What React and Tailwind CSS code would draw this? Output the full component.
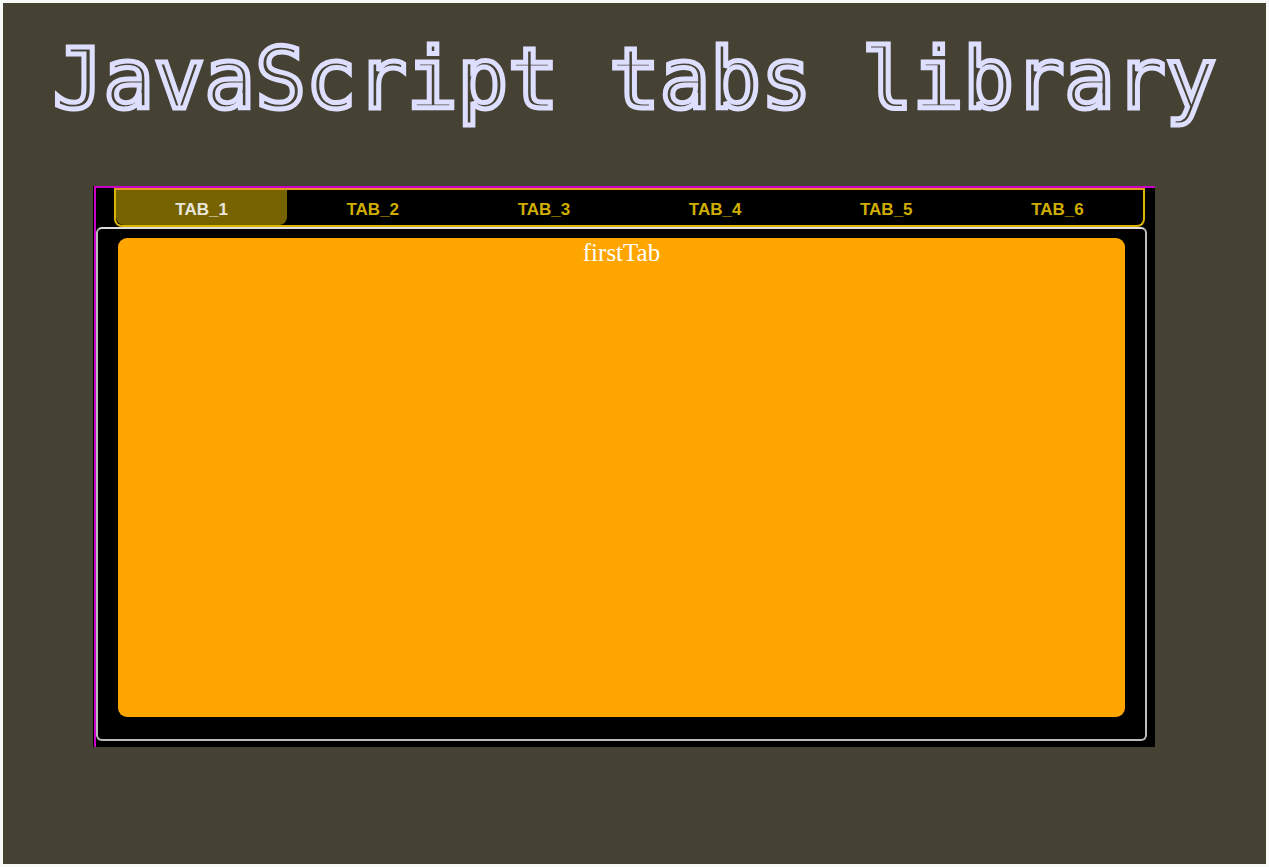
import { useState } from "react";

const tabs = [
  { label: "TAB_1", content: "firstTab" },
  { label: "TAB_2", content: "secondTab" },
  { label: "TAB_3", content: "thirdTab" },
  { label: "TAB_4", content: "fourthTab" },
  { label: "TAB_5", content: "fifthTab" },
  { label: "TAB_6", content: "sixthTab" },
];

function Tabs() {
  const [active, setActive] = useState(0);
  return (
    <section className="border-l border-black bg-black">
      <div className="border-l-2 border-t-2 border-[#c800c8] pb-1.5">
        <div
          role="tablist"
          className="ml-[18px] mr-[10px] flex h-[39px] rounded-b-lg border-2 border-[#d9b400] border-t-[#e09a20]"
        >
          {tabs.map((tab, i) => (
            <button
              key={tab.label}
              id={`tab-${i}`}
              type="button"
              role="tab"
              aria-selected={i === active}
              aria-controls="tab-panel"
              onClick={() => setActive(i)}
              className={
                i === active
                  ? "flex-1 rounded-b-lg bg-[#776200] pt-1 font-['Liberation_Sans',sans-serif] text-[17px] font-bold text-[#e8e6da]"
                  : "flex-1 rounded-b-lg pt-1 font-['Liberation_Sans',sans-serif] text-[17px] font-bold text-[#d0ae00]"
              }
            >
              {tab.label}
            </button>
          ))}
        </div>
        <div className="mr-2 rounded-md border-2 border-[#bdbdbd] border-t-[#dedede] pb-[22px] pl-5 pr-5 pt-[9px]">
          <div
            id="tab-panel"
            role="tabpanel"
            aria-labelledby={`tab-${active}`}
            className="h-[479px] rounded-[9px] bg-[#ffa500] text-center font-['Liberation_Serif',serif] text-[25px] leading-[30px] text-white"
          >
            {tabs[active].content}
          </div>
        </div>
      </div>
    </section>
  );
}

export default function App() {
  return (
    <main className="min-h-screen border-[3px] border-[#f7faf7] bg-[#454133]">
      <h1 className="whitespace-nowrap pt-4 text-center font-['DejaVu_Sans_Mono',monospace] text-[84px] leading-[120px] text-transparent [-webkit-text-stroke:5px_#dedeff]">
        JavaScript tabs library
      </h1>
      <div className="pb-10 pl-[90px] pr-[111px] pt-[47px]">
        <Tabs />
      </div>
    </main>
  );
}
